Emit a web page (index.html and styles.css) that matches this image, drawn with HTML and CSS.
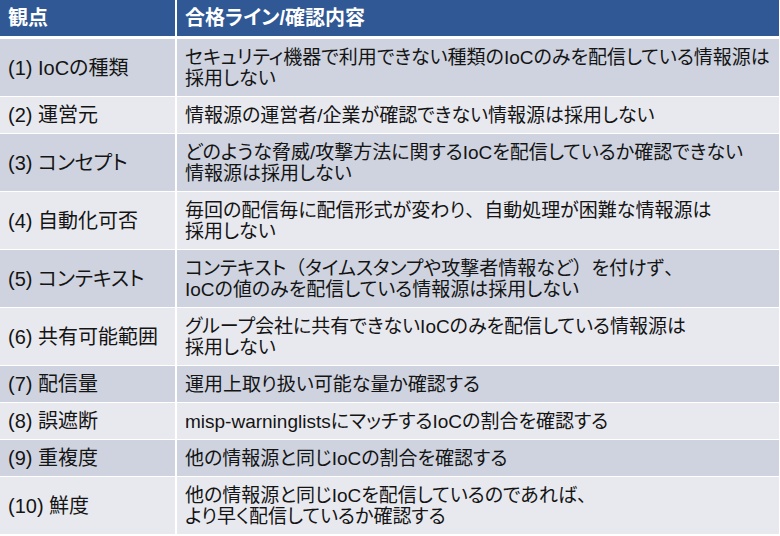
FILE: index.html
```html
<!DOCTYPE html>
<html lang="ja">
<head>
<meta charset="utf-8">
<link rel="stylesheet" href="styles.css">
</head>
<body>
<table class="grid">
  <colgroup><col class="c1"><col class="c2"></colgroup>
  <thead>
    <tr><th>観点</th><th>合格ライン/確認内容</th></tr>
  </thead>
  <tbody>
    <tr class="odd"><td>(1) IoCの種類</td><td>セキュリティ機器で利用できない種類のIoCのみを配信している情報源は<br>採用しない</td></tr>
    <tr class="even"><td>(2) 運営元</td><td>情報源の運営者/企業が確認できない情報源は採用しない</td></tr>
    <tr class="odd"><td>(3) コンセプト</td><td>どのような脅威/攻撃方法に関するIoCを配信しているか確認できない<br>情報源は採用しない</td></tr>
    <tr class="even"><td>(4) 自動化可否</td><td>毎回の配信毎に配信形式が変わり<span class="fw">、</span>自動処理が困難な情報源は<br>採用しない</td></tr>
    <tr class="odd"><td>(5) コンテキスト</td><td>コンテキスト<span class="fw">（</span>タイムスタンプや攻撃者情報など<span class="fw">）</span>を付けず<span class="fw">、</span><br>IoCの値のみを配信している情報源は採用しない</td></tr>
    <tr class="even"><td>(6) 共有可能範囲</td><td>グループ会社に共有できないIoCのみを配信している情報源は<br>採用しない</td></tr>
    <tr class="odd"><td>(7) 配信量</td><td>運用上取り扱い可能な量か確認する</td></tr>
    <tr class="even"><td>(8) 誤遮断</td><td>misp-warninglistsにマッチするIoCの割合を確認する</td></tr>
    <tr class="odd"><td>(9) 重複度</td><td>他の情報源と同じIoCの割合を確認する</td></tr>
    <tr class="even"><td>(10) 鮮度</td><td>他の情報源と同じIoCを配信しているのであれば<span class="fw">、</span><br>より早く配信しているか確認する</td></tr>
  </tbody>
</table>
</body>
</html>
```

FILE: styles.css
```css
html, body {
  margin: 0;
  padding: 0;
  background: #ffffff;
}

.grid {
  width: 779px;
  table-layout: fixed;
  border-collapse: separate;
  border-spacing: 0;
  font-family: "Liberation Sans", "Noto Sans CJK JP", sans-serif;
  font-size: 20px;
  line-height: 21px;
  font-feature-settings: "palt" 1;
  color: #141414;
}

.c1 { width: 177px; }
.c2 { width: 602px; }

.grid th,
.grid td {
  text-align: left;
  white-space: nowrap;
  overflow: hidden;
  vertical-align: middle;
  padding: 8px 0 7px 8px;
  border-bottom: 1px solid #ffffff;
}

.grid td + td {
  font-size: 19px;
}

.fw {
  font-feature-settings: normal;
}

.grid th:first-child,
.grid td:first-child {
  border-right: 2px solid #ffffff;
}

.grid th {
  background: #2f5895;
  color: #ffffff;
  font-weight: bold;
  height: 20px;
  padding-top: 8px;
  padding-bottom: 7px;
  border-bottom: 3px solid #ffffff;
}

.odd td { background: #ced3df; }
.even td { background: #e8e9ef; }
```
